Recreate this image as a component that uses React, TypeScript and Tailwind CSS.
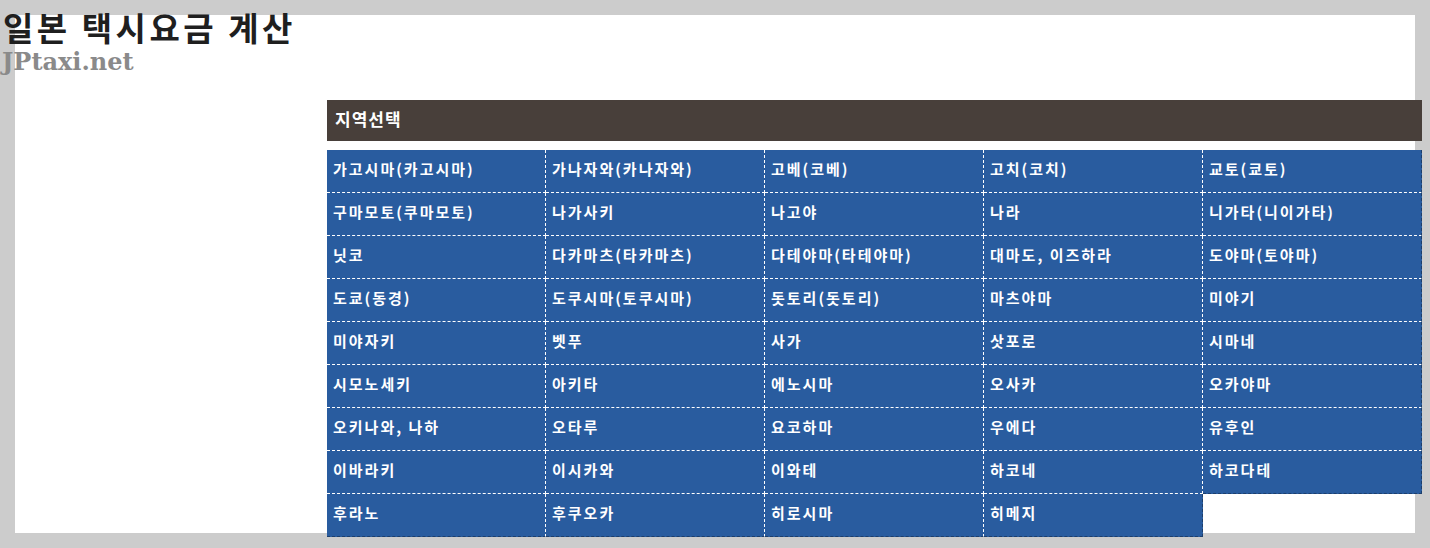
import React from "react"

const cities = [
  "가고시마(카고시마)", "가나자와(카나자와)", "고베(코베)", "고치(코치)", "교토(쿄토)",
  "구마모토(쿠마모토)", "나가사키", "나고야", "나라", "니가타(니이가타)",
  "닛코", "다카마츠(타카마츠)", "다테야마(타테야마)", "대마도, 이즈하라", "도야마(토야마)",
  "도쿄(동경)", "도쿠시마(토쿠시마)", "돗토리(돗토리)", "마츠야마", "미야기",
  "미야자키", "벳푸", "사가", "삿포로", "시마네",
  "시모노세키", "아키타", "에노시마", "오사카", "오카야마",
  "오키나와, 나하", "오타루", "요코하마", "우에다", "유후인",
  "이바라키", "이시카와", "이와테", "하코네", "하코다테",
  "후라노", "후쿠오카", "히로시마", "히메지",
]

const COLS = 5

function CityCell({ name, index }: { name: string; index: number }) {
  const col = index % COLS
  // edge cells get a darker dashed line instead of the white one
  const lastInRow = col === COLS - 1 || index === cities.length - 1
  const nothingBelow = index + COLS >= cities.length

  return (
    <a
      href="#"
      className={
        "flex h-[43px] items-center border-dashed bg-[#295c9f] pb-[4px] pl-[6px] text-[15px] font-bold tracking-[2px] text-white " +
        (lastInRow ? "border-r border-r-[#1d3f6c] " : "border-r border-r-white ") +
        (nothingBelow ? "border-b border-b-[#1d3f6c]" : "border-b border-b-white")
      }
    >
      {name}
    </a>
  )
}

export default function App() {
  return (
    <div
      className="min-h-[548px] bg-[#cccccc] p-[15px]"
      style={{ fontFamily: '"Noto Sans CJK KR", "Noto Sans", sans-serif' }}
    >
      <div className="flow-root h-[518px] w-[1400px] bg-white">
        {/* logo sits half over the grey frame */}
        <header className="relative -left-[12px] -top-[8px]">
          <h1 className="text-[33px] font-bold leading-[40px] tracking-[3.5px] text-[#1f1f1f]">
            일본 택시요금 계산
          </h1>
          <div
            className="-ml-[1px] mt-[2px] text-[24px] font-bold leading-[26px] text-[#8a8a8a]"
            style={{ fontFamily: '"DejaVu Serif", serif' }}
          >
            JPtaxi.net
          </div>
        </header>

        <div className="mt-[17px] flex">
          <aside className="w-[312px] shrink-0" />

          <main className="w-[1095px] shrink-0">
            <div className="flex h-[41px] items-center bg-[#483f3a] pb-[3px] pl-[8px] text-[17px] font-bold tracking-[1px] text-white">
              지역선택
            </div>

            <nav className="mt-[9px] grid grid-cols-5">
              {cities.map((c, i) => (
                <CityCell key={c} name={c} index={i} />
              ))}
            </nav>
          </main>
        </div>
      </div>
    </div>
  )
}
